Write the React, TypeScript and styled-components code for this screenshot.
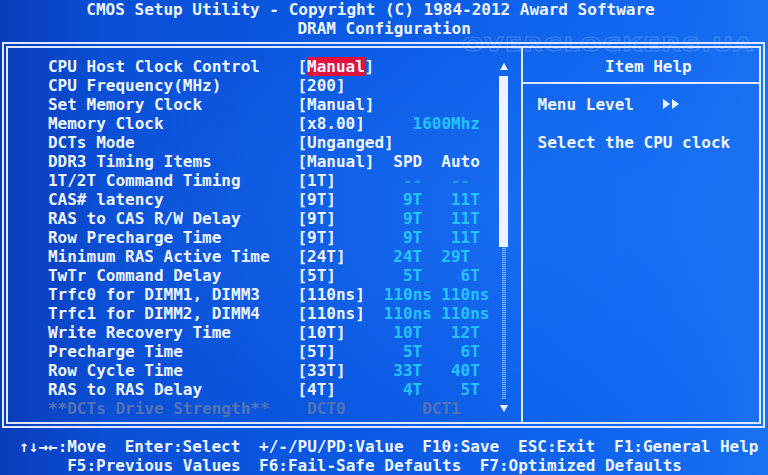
import React from 'react'
import styled, { createGlobalStyle } from 'styled-components'

const CELL = 9.6
const ROW = 19

const WHITE = '#eef4ff'
const LINE = '#dce8ff'
const CYAN = '#25c3ff'
const GRAY = '#5572b2'
const HOT = '#e3123c'

type Tone = 'white' | 'cyan' | 'dim' | 'gray' | 'hot'
type Seg = [number, string, Tone?]

const GlobalStyle = createGlobalStyle`
  html, body {
    margin: 0;
    padding: 0;
  }
  body {
    width: 768px;
    height: 475px;
    overflow: hidden;
    background: #0b52da;
  }
`

const Screen = styled.div`
  position: relative;
  width: 768px;
  height: 475px;
  display: flex;
  flex-direction: column;
  overflow: hidden;
  background:
    radial-gradient(ellipse at 65% 45%, rgba(40, 130, 255, 0.35), rgba(0, 0, 0, 0) 60%),
    linear-gradient(90deg, #093cb9 0%, #0a4fd6 14%, #0b5ae4 50%, #1268f0 85%, #1870f2 100%);
  font-family: 'DejaVu Sans Mono', 'Liberation Mono', monospace;
  font-weight: bold;
  font-size: 16px;
  color: ${WHITE};
`

const TextGrid = styled.div<{ $cols: number; $rows: number }>`
  display: grid;
  grid-template-columns: repeat(${(p) => p.$cols}, ${CELL}px);
  grid-template-rows: repeat(${(p) => p.$rows}, ${ROW}px);
  line-height: ${ROW}px;
`

const toneColor = (t: Tone) =>
  t === 'cyan' ? CYAN : t === 'dim' ? 'rgba(37, 195, 255, 0.5)' : t === 'gray' ? GRAY : WHITE

const Cell = styled.span<{ $row: number; $col: number; $len: number; $tone: Tone }>`
  grid-row: ${(p) => p.$row};
  grid-column: ${(p) => p.$col} / span ${(p) => p.$len};
  white-space: pre;
  color: ${(p) => toneColor(p.$tone)};
  background: ${(p) => (p.$tone === 'hot' ? HOT : 'transparent')};
`

const Header = styled(TextGrid)`
  height: ${ROW * 2}px;
`

const Frame = styled.div`
  box-sizing: border-box;
  width: 763px;
  height: 386px;
  margin: 4px 0 0 2px;
  border: 6px double ${LINE};
  display: flex;
`

const LeftPanel = styled(TextGrid)`
  width: 513px;
  box-sizing: border-box;
  padding: 9px 0 0 1.6px;
  align-content: start;
`

const RightPanel = styled.div`
  flex: 1;
  display: flex;
  flex-direction: column;
  border-left: 2px solid ${LINE};
`

const HelpTitle = styled.div`
  box-sizing: border-box;
  height: 36px;
  padding: 9px 0 0 82px;
  line-height: ${ROW}px;
  border-bottom: 2px solid ${LINE};
`

const HelpBody = styled.div`
  display: flex;
  flex-direction: column;
  padding: 11px 0 0 14.6px;
`

const HelpLine = styled.div`
  height: ${ROW}px;
  line-height: ${ROW}px;
  white-space: pre;
`

const Arrows = styled.span`
  display: inline-flex;
  gap: 2px;
  vertical-align: middle;
  margin-top: -4px;
`

const Scroll = styled.div`
  grid-column: 52;
  grid-row: 1 / span 19;
  display: flex;
  flex-direction: column;
  align-items: flex-start;
`

const ScrollArrow = styled.div`
  height: ${ROW}px;
  width: ${CELL}px;
  display: flex;
  align-items: center;
  justify-content: center;
`

const Thumb = styled.div`
  width: 9px;
  height: ${ROW * 9}px;
  background: ${WHITE};
`

const Track = styled.div`
  flex: 1;
  width: 4px;
  margin-left: 3.5px;
  background: repeating-linear-gradient(
    0deg,
    rgba(200, 220, 255, 0.55) 0px,
    rgba(200, 220, 255, 0.55) 1px,
    rgba(200, 220, 255, 0.15) 1px,
    rgba(200, 220, 255, 0.15) 2px
  );
`

const Footer = styled(TextGrid)`
  margin-top: 9px;
`

const Watermark = styled.div`
  position: absolute;
  top: 33px;
  left: 462px;
  font-family: 'DejaVu Sans', 'Liberation Sans', sans-serif;
  font-weight: bold;
  font-size: 19px;
  letter-spacing: 1px;
  color: transparent;
  -webkit-text-stroke: 1px rgba(210, 230, 255, 0.22);
  transform: scaleX(1.32);
  transform-origin: left center;
  pointer-events: none;
`

const HEADER: Seg[][] = [
  [[9, 'CMOS Setup Utility - Copyright (C) 1984-2012 Award Software']],
  [[31, 'DRAM Configuration']],
]

const ITEMS: Seg[][] = [
  [[5, 'CPU Host Clock Control'], [31, '['], [32, 'Manual', 'hot'], [38, ']']],
  [[5, 'CPU Frequency(MHz)'], [31, '[200]']],
  [[5, 'Set Memory Clock'], [31, '[Manual]']],
  [[5, 'Memory Clock'], [31, '[x8.00]'], [43, '1600Mhz', 'cyan']],
  [[5, 'DCTs Mode'], [31, '[Unganged]']],
  [[5, 'DDR3 Timing Items'], [31, '[Manual]'], [41, 'SPD'], [46, 'Auto']],
  [[5, '1T/2T Command Timing'], [31, '[1T]'], [42, '--', 'dim'], [47, '--', 'dim']],
  [[5, 'CAS# latency'], [31, '[9T]'], [42, '9T', 'cyan'], [47, '11T', 'cyan']],
  [[5, 'RAS to CAS R/W Delay'], [31, '[9T]'], [42, '9T', 'cyan'], [47, '11T', 'cyan']],
  [[5, 'Row Precharge Time'], [31, '[9T]'], [42, '9T', 'cyan'], [47, '11T', 'cyan']],
  [[5, 'Minimum RAS Active Time'], [31, '[24T]'], [41, '24T', 'cyan'], [46, '29T', 'cyan']],
  [[5, 'TwTr Command Delay'], [31, '[5T]'], [42, '5T', 'cyan'], [48, '6T', 'cyan']],
  [[5, 'Trfc0 for DIMM1, DIMM3'], [31, '[110ns]'], [40, '110ns', 'cyan'], [46, '110ns', 'cyan']],
  [[5, 'Trfc1 for DIMM2, DIMM4'], [31, '[110ns]'], [40, '110ns', 'cyan'], [46, '110ns', 'cyan']],
  [[5, 'Write Recovery Time'], [31, '[10T]'], [41, '10T', 'cyan'], [47, '12T', 'cyan']],
  [[5, 'Precharge Time'], [31, '[5T]'], [42, '5T', 'cyan'], [48, '6T', 'cyan']],
  [[5, 'Row Cycle Time'], [31, '[33T]'], [41, '33T', 'cyan'], [47, '40T', 'cyan']],
  [[5, 'RAS to RAS Delay'], [31, '[4T]'], [42, '4T', 'cyan'], [48, '5T', 'cyan']],
  [[5, '**DCTs Drive Strength**', 'gray'], [32, 'DCT0', 'gray'], [44, 'DCT1', 'gray']],
]

const FOOTER: Seg[][] = [
  [
    [2, '↑↓→←:Move'],
    [13, 'Enter:Select'],
    [27, '+/-/PU/PD:Value'],
    [44, 'F10:Save'],
    [54, 'ESC:Exit'],
    [64, 'F1:General Help'],
  ],
  [
    [7, 'F5:Previous Values'],
    [27, 'F6:Fail-Safe Defaults'],
    [50, 'F7:Optimized Defaults'],
  ],
]

// colOffset: grid column 1 corresponds to screen column colOffset
function renderRows(rows: Seg[][], colOffset: number) {
  return rows.flatMap((segs, r) =>
    segs.map(([col, text, tone]) => (
      <Cell
        key={`${r}-${col}`}
        $row={r + 1}
        $col={col - colOffset + 1}
        $len={Array.from(text).length}
        $tone={tone ?? 'white'}
      >
        {text}
      </Cell>
    ))
  )
}

function Triangle({ dir }: { dir: 'up' | 'down' | 'right' }) {
  if (dir === 'right') {
    return (
      <svg width="7" height="10" viewBox="0 0 7 10">
        <polygon points="0,0 7,5 0,10" fill={WHITE} />
      </svg>
    )
  }
  const pts = dir === 'up' ? '4,0 8,7 0,7' : '0,0 8,0 4,7'
  return (
    <svg width="8" height="8" viewBox="0 0 8 8">
      <polygon points={pts} fill={WHITE} />
    </svg>
  )
}

export default function App() {
  return (
    <>
      <GlobalStyle />
      <Screen>
        <Header $cols={80} $rows={2}>
          {renderRows(HEADER, 0)}
        </Header>
        <Frame>
          <LeftPanel $cols={53} $rows={19}>
            {renderRows(ITEMS, 1)}
            <Scroll>
              <ScrollArrow>
                <Triangle dir="up" />
              </ScrollArrow>
              <Thumb />
              <Track />
              <ScrollArrow>
                <Triangle dir="down" />
              </ScrollArrow>
            </Scroll>
          </LeftPanel>
          <RightPanel>
            <HelpTitle>Item Help</HelpTitle>
            <HelpBody>
              <HelpLine>
                {'Menu Level   '}
                <Arrows>
                  <Triangle dir="right" />
                  <Triangle dir="right" />
                </Arrows>
              </HelpLine>
              <HelpLine> </HelpLine>
              <HelpLine>Select the CPU clock</HelpLine>
            </HelpBody>
          </RightPanel>
        </Frame>
        <Footer $cols={80} $rows={2}>
          {renderRows(FOOTER, 0)}
        </Footer>
        <Watermark>OVERCLOCKERS.UA</Watermark>
      </Screen>
    </>
  )
}
